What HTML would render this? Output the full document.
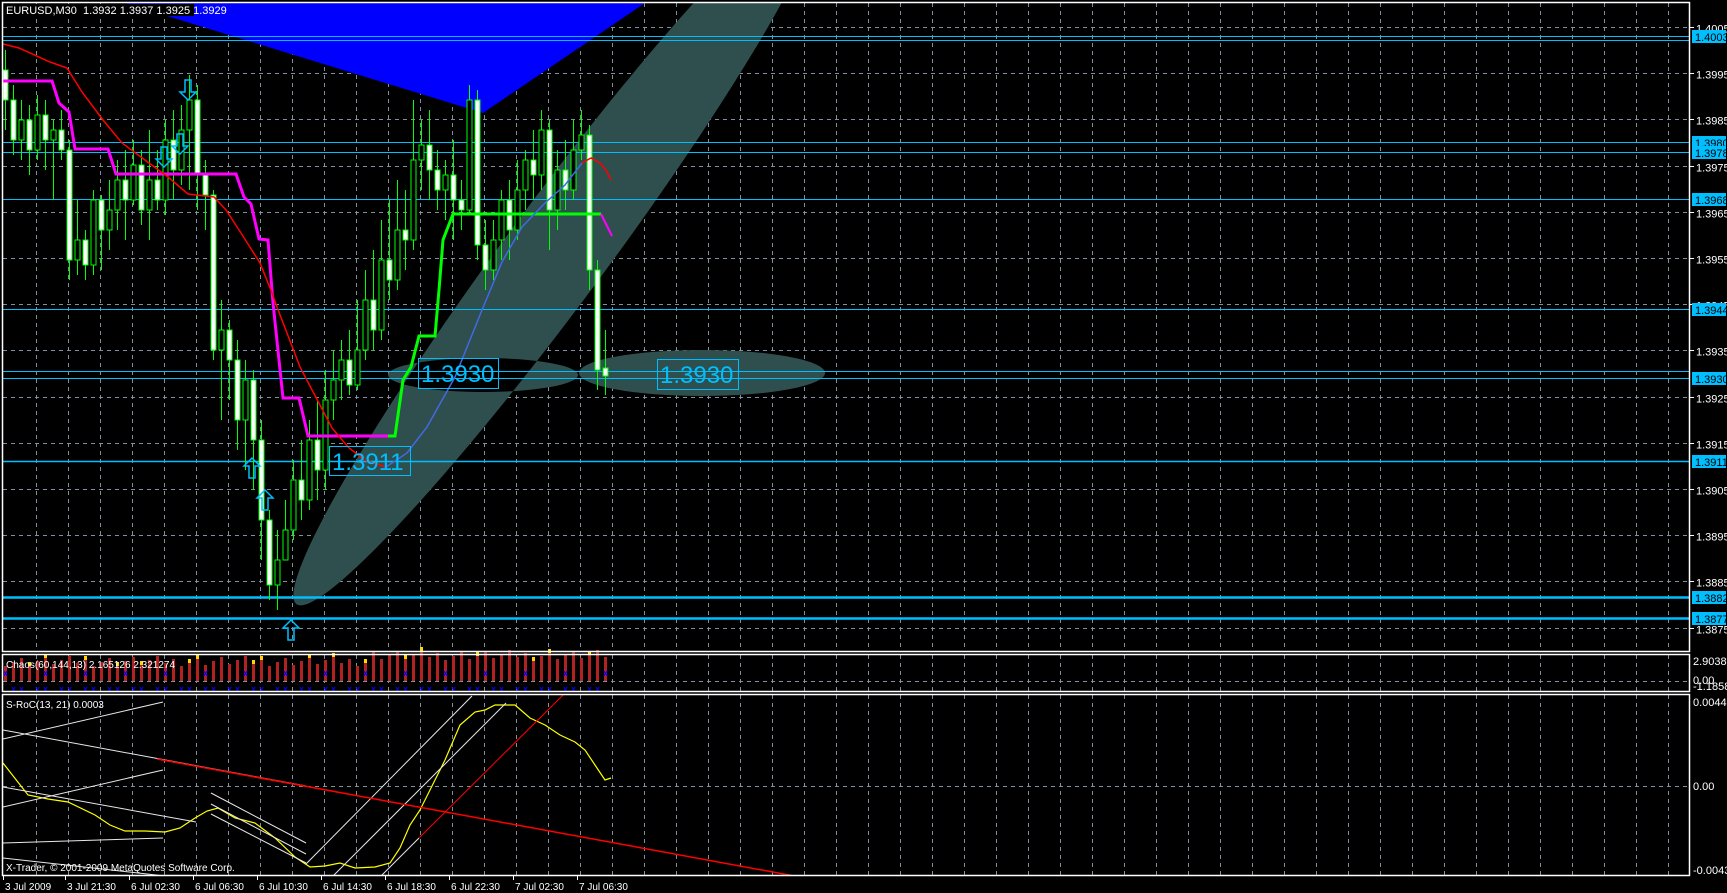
<!DOCTYPE html>
<html><head><meta charset="utf-8"><style>
html,body{margin:0;padding:0;background:#000;width:1727px;height:893px;overflow:hidden}
svg{display:block}
text{font-family:"Liberation Sans",sans-serif}
</style></head><body>
<svg id="s" width="1727" height="893" xmlns="http://www.w3.org/2000/svg">
<defs>
<clipPath id="mainclip"><rect x="3" y="3" width="1686" height="648"/></clipPath>
<clipPath id="sclip"><rect x="3" y="695" width="1686" height="180"/></clipPath>
<clipPath id="bandclip"><ellipse cx="557" cy="252" rx="438" ry="50" transform="rotate(-53.5 557 252)"/></clipPath>
</defs>
<g id="grid"></g>
<g clip-path="url(#mainclip)">
<polygon points="125,3 645,3 483,113" fill="#0000ff"/>
<ellipse cx="557" cy="252" rx="438" ry="50" transform="rotate(-53.5 557 252)" fill="#2f4f4f"/>
<ellipse cx="483" cy="375" rx="95" ry="17" fill="#2f4f4f"/>
<ellipse cx="702" cy="373" rx="123" ry="23" fill="#2f4f4f"/>
<g clip-path="url(#bandclip)"><ellipse cx="483" cy="375" rx="95" ry="17" fill="#000"/><ellipse cx="702" cy="373" rx="123" ry="23" fill="#000"/></g>
<g id="hl"></g>
<g id="candles"></g>
<polyline fill="none" stroke="#ff00ff" stroke-width="3" points="3,81 52,81 59,103 69,112 75,149 108,149 116,174 236,174 244,197 251,204 259,239 268,240 273,303 283,398 299,398 308,436 388,436"/>
<polyline fill="none" stroke="#00ff00" stroke-width="3" points="388,436 395,436 403,380 411,367 419,336 435,336 439,290 443,240 453,214 601,214"/>
<polyline fill="none" stroke="#ff00ff" stroke-width="2" points="601,214 606,224 612,236"/>
<polyline fill="none" stroke="#ff0000" stroke-width="1.5" points="3,44 19,48 50,62 67,68 82,92 103,120 122,143 149,163 168,177 188,194 214,197 226,210 241,233 260,263 272,293 277,307 300,367 332,428 348,447 364,460 386,467"/>
<polyline fill="none" stroke="#4169e1" stroke-width="1.5" points="386,467 407,453 427,427 455,377 482,310 502,262 522,227 545,203 565,185 582,163"/>
<polyline fill="none" stroke="#ff0000" stroke-width="1.5" points="582,163 591,158 600,163 606,170 611,180"/>
<g fill="none" stroke="#00bfff" stroke-width="2" id="arrows"></g>
<g font-size="24" fill="#00bfff">
<rect x="418.5" y="358.5" width="80" height="30" fill="none" stroke="#00bfff"/><text x="421" y="382">1.3930</text>
<rect x="657.5" y="359.5" width="81" height="30" fill="none" stroke="#00bfff"/><text x="660" y="383">1.3930</text>
<rect x="329.5" y="446.5" width="81" height="29" fill="none" stroke="#00bfff"/><text x="332" y="470">1.3911</text>
</g>
</g>
<rect x="6" y="4" width="188" height="12" fill="#000"/>
<text x="6" y="14" font-size="11" fill="#fff">EURUSD,M30&#160; 1.3932 1.3937 1.3925 1.3929</text>
<g id="chaos"></g>
<g clip-path="url(#sclip)">
<polyline fill="none" stroke="#ffff00" stroke-width="1.2" points="3,763 28,795 48,799 68,802 95,815 110,825 125,831 145,831 165,832 180,828 195,818 207,811 218,808 235,818 255,823 275,838 295,857 310,867 325,866 340,863 355,868 375,867 390,863 400,848 410,825 420,810 435,780 445,760 460,725 475,712 485,710 495,705 505,705 515,705 530,718 545,725 560,735 575,742 585,750 595,765 605,780 611,778"/>
<g stroke="#e8e8e8" stroke-width="1" fill="none">
<line x1="3" y1="739" x2="163" y2="702"/>
<line x1="3" y1="730" x2="306" y2="786"/>
<line x1="3" y1="807" x2="163" y2="770"/>
<line x1="3" y1="787" x2="196" y2="822"/>
<line x1="3" y1="843" x2="163" y2="838"/>
<line x1="3" y1="858" x2="174" y2="877"/>
<line x1="211" y1="793" x2="306" y2="843"/>
<line x1="211" y1="804" x2="306" y2="854"/>
<line x1="211" y1="814" x2="306" y2="863"/>
<line x1="306" y1="864" x2="472" y2="696"/>
<line x1="332" y1="877" x2="506" y2="703"/>
<line x1="380" y1="877" x2="419" y2="838"/>
</g>
<line x1="157" y1="759" x2="800" y2="877" stroke="#ff0000" stroke-width="1.5"/>
<line x1="419" y1="838" x2="563" y2="695" stroke="#ff0000" stroke-width="1"/>
</g>
<text x="6" y="708" font-size="10" fill="#fff">S-RoC(13, 21) 0.0003</text>
<text x="6" y="871" font-size="10" fill="#fff">X-Trader, © 2001-2009 MetaQuotes Software Corp.</text>
<g id="frames" fill="none" stroke="#fff" stroke-width="1.5">
<rect x="2.5" y="2.5" width="1687" height="649"/>
<rect x="2.5" y="654.5" width="1687" height="37"/>
<rect x="2.5" y="694.5" width="1687" height="181"/>
</g>
<g id="axis" font-size="11" fill="#fff"></g>
</svg>
<script>
(function(){
var NS="http://www.w3.org/2000/svg";
function el(p,t,a,txt){var e=document.createElementNS(NS,t);for(var k in a)e.setAttribute(k,a[k]);if(txt!=null)e.textContent=txt;p.appendChild(e);return e;}
var g=document.getElementById('grid');
function yP(p){return 27+(1.4005-p)*46200;}
for(var x=36;x<1690;x+=32){
 el(g,'line',{x1:x+.5,y1:3,x2:x+.5,y2:651,stroke:'#8090a0','stroke-dasharray':'4 4'});
 el(g,'line',{x1:x+.5,y1:655,x2:x+.5,y2:691,stroke:'#8090a0','stroke-dasharray':'4 4'});
 el(g,'line',{x1:x+.5,y1:695,x2:x+.5,y2:875,stroke:'#8090a0','stroke-dasharray':'4 4'});
}
var ax=document.getElementById('axis');
for(var i=0;i<=13;i++){var p=1.4005-i*0.001;var y=Math.round(yP(p))+.5;
 el(g,'line',{x1:3,y1:y,x2:1689,y2:y,stroke:'#8090a0','stroke-dasharray':'4 4'});
 el(ax,'line',{x1:1690,y1:y,x2:1694,y2:y,stroke:'#fff'});
 el(ax,'text',{x:1696,y:y+5},p.toFixed(4));}
el(g,'line',{x1:3,y1:681.5,x2:1689,y2:681.5,stroke:'#8090a0','stroke-dasharray':'4 4'});
el(g,'line',{x1:3,y1:786.5,x2:1689,y2:786.5,stroke:'#8090a0','stroke-dasharray':'4 4'});
el(ax,'text',{x:1693,y:665},'2.903813');
el(ax,'text',{x:1693,y:684},'0.00');
el(ax,'text',{x:1693,y:690},'-1.18589');
el(ax,'text',{x:1693,y:706},'0.0044');
el(ax,'text',{x:1693,y:790},'0.00');
el(ax,'text',{x:1693,y:874},'-0.0043');
var hl=document.getElementById('hl');
var levels=[[36,'1.4003',1],[40,null,1],[142,'1.3980',1],[152,'1.3978',1],[199,'1.3968',1],[309,'1.3944',1],[371,null,1],[378,'1.3930',1],[461,'1.3911',1.5],[597,'1.3882',2.5],[618,'1.3877',2.5]];
levels.forEach(function(l){el(hl,'line',{x1:3,y1:l[0]+.5,x2:1689,y2:l[0]+.5,stroke:'#00bfff','stroke-width':l[2]});
 if(l[1]){el(ax,'rect',{x:1692,y:l[0]-6,width:34,height:13,fill:'#00bfff'});el(ax,'text',{x:1695,y:l[0]+5,fill:'#000'},l[1]);}});
var tl=['3 Jul 2009','3 Jul 21:30','6 Jul 02:30','6 Jul 06:30','6 Jul 10:30','6 Jul 14:30','6 Jul 18:30','6 Jul 22:30','7 Jul 02:30','7 Jul 06:30'];
for(var k=0;k<10;k++){var x=k==0?3:64*k+1;el(ax,'line',{x1:x+.5,y1:876,x2:x+.5,y2:880,stroke:'#fff'});el(ax,'text',{x:x+2,y:890,'font-size':10},tl[k]);}
var C=[[70,100,50,130],[100,140,85,155],[140,120,100,160],[120,150,105,175],[150,115,95,160],[115,140,100,170],[140,130,120,200],[130,150,110,160],[150,260,140,280],[260,240,200,275],[240,265,230,280],[265,200,190,275],[200,230,195,270],[230,210,180,250],[210,180,160,230],[180,200,150,240],[200,165,140,205],[165,210,150,225],[210,180,130,240],[180,200,150,210],[200,140,120,215],[140,170,110,200],[170,130,105,185],[130,100,75,190],[100,175,85,210],[175,195,160,230],[195,350,190,360],[350,330,300,420],[330,360,320,400],[360,420,340,450],[420,380,360,470],[380,440,370,490],[440,520,420,560],[520,585,510,600],[585,560,530,610],[560,530,500,560],[530,480,460,540],[480,500,440,520],[500,440,420,510],[440,470,400,500],[470,400,370,490],[400,380,350,420],[380,360,340,400],[360,385,330,395],[385,350,300,390],[350,300,270,360],[300,330,250,350],[330,260,220,340],[260,280,200,300],[280,230,180,290],[230,240,190,270],[240,160,100,250],[160,145,120,190],[145,170,110,200],[170,190,150,210],[190,175,160,220],[175,200,140,240],[200,210,180,230],[210,100,85,215],[100,245,90,260],[245,270,220,290],[270,240,220,280],[240,200,190,260],[200,230,180,260],[230,190,160,240],[190,160,150,210],[160,175,130,200],[175,130,110,190],[130,210,120,250],[210,170,150,230],[170,190,140,210],[190,150,120,200],[150,135,110,160],[135,270,125,290],[270,370,260,390],[368,376,330,395]];
var cg=document.getElementById('candles');
for(var i=0;i<C.length;i++){var x=5+8*i,o=C[i][0],c=C[i][1];
 var tp=Math.min(o,c),bt=Math.max(o,c);if(bt-tp<3)bt=tp+3;
 el(cg,'line',{x1:x+.5,y1:C[i][2],x2:x+.5,y2:C[i][3],stroke:'#00ff00'});
 el(cg,'rect',{x:x-2,y:tp,width:5,height:bt-tp,fill:(c>o)?'#fff':'#000',stroke:'#00ff00'});}
var ar=document.getElementById('arrows');
function down(x,y){el(ar,'path',{d:'M'+(x-3)+' '+y+'h6v12h5l-8 8l-8-8h5z','stroke-width':1.5});}
function up(x,y){el(ar,'path',{d:'M'+(x-3)+' '+(y+20)+'h6v-12h5l-8-8l-8 8h5z','stroke-width':1.5});}
down(188,80);down(180,134);down(164,147);up(252,458);up(265,490);up(291,620);
var ch=document.getElementById('chaos');
for(var i=0;i<76;i++){var x=4+8*i;var h=15+((i*37)%11)+(i>45?6:0);
 el(ch,'rect',{x:x,y:681-h,width:3,height:h,fill:'#b22222'});
 if(i%7==3||i%9==5)el(ch,'rect',{x:x,y:681-h-3,width:3,height:4,fill:'#ffd700'});}
for(var i=0;i<76;i++){var x=4+8*i;
 if((i*13)%5==0)el(ch,'text',{x:x-1,y:676,'font-size':9,fill:'#0000ff','font-weight':'bold'},'x');
 if((i*7)%3!=0)el(ch,'text',{x:x-1,y:692,'font-size':9,fill:'#0000ff','font-weight':'bold'},'x');}
el(ch,'text',{x:6,y:668,'font-size':10,fill:'#fff'},'Chaos(60,144,13) 2.165126 2.321274');
})();
</script>
</body></html>
